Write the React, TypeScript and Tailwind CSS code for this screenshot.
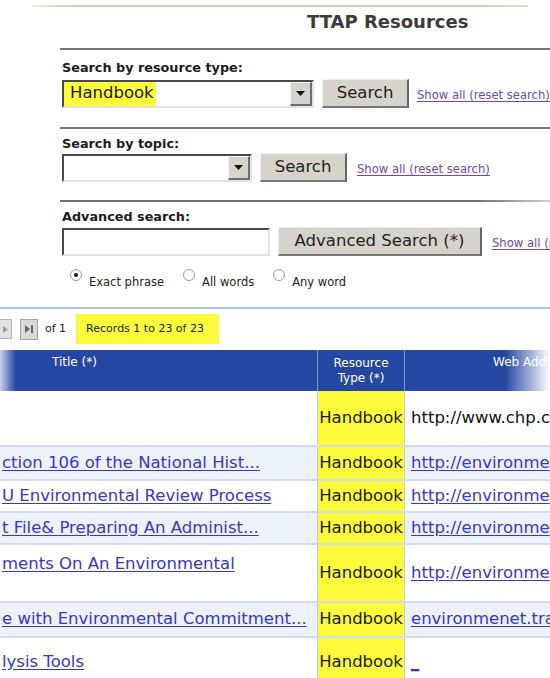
import React from 'react';

type Row = {
  title: string;
  web: string;
  webLink: boolean;
  h: string;
  alt: boolean;
  titleTop?: boolean;
};

const rows: Row[] = [
  { title: '', web: 'http://www.chp.c', webLink: false, h: 'h-[56px]', alt: false },
  { title: 'ction 106 of the National Hist...', web: 'http://environme', webLink: true, h: 'h-[34px]', alt: true },
  { title: 'U Environmental Review Process', web: 'http://environme', webLink: true, h: 'h-[32px]', alt: false },
  { title: 't File& Preparing An Administ...', web: 'http://environme', webLink: true, h: 'h-[32px]', alt: true },
  { title: 'ments On An Environmental', web: 'http://environme', webLink: true, h: 'h-[58px]', alt: false, titleTop: true },
  { title: 'e with Environmental Commitment...', web: 'environmenet.tra', webLink: true, h: 'h-[35px]', alt: true },
  { title: 'lysis Tools', web: '_', webLink: true, h: 'h-[50px]', alt: false },
];

function DropArrow() {
  return (
    <div className="w-[22px] shrink-0 self-stretch flex items-center justify-center bg-[#d6d3cc] border-t border-l border-t-[#f4f4f4] border-l-[#f4f4f4] border-b-2 border-r-2 border-b-[#6d6d6d] border-r-[#6d6d6d]">
      <svg width="9" height="5" viewBox="0 0 9 5">
        <path d="M0 0h9L4.5 5z" fill="#111" />
      </svg>
    </div>
  );
}

function SelectBox({ width, value }: { width: string; value?: string }) {
  return (
    <div className={`${width} shrink-0 h-[28px] flex bg-white border-2 border-t-[#4a4a4a] border-l-[#4a4a4a] border-b-[#e2e2e2] border-r-[#e2e2e2]`}>
      <div className="flex-1 flex items-center">
        {value && (
          <span className="h-full flex items-center bg-[#fbfb3c] pl-[6px] pr-[2px] text-[16.5px] text-[#1a1a1a]">{value}</span>
        )}
      </div>
      <DropArrow />
    </div>
  );
}

function Button({ label, width }: { label: string; width: string }) {
  return (
    <button className={`${width} shrink-0 h-[29px] bg-[#d6d3cc] text-[16.5px] text-[#222] border-t border-l border-t-[#f2f2f2] border-l-[#f2f2f2] border-b-2 border-r-2 border-b-[#777] border-r-[#666] leading-none whitespace-nowrap`}>
      {label}
    </button>
  );
}

function ResetLink({ text }: { text: string }) {
  return (
    <a className="shrink-0 text-[11.6px] text-[#7048b0] underline underline-offset-2 whitespace-nowrap">{text}</a>
  );
}

function Radio({ checked, label }: { checked?: boolean; label: string }) {
  return (
    <div className="flex items-start gap-[7px]">
      <span className="mt-[-3px] w-[12px] h-[12px] rounded-full border border-[#9a9a9a] bg-white flex items-center justify-center">
        {checked && <span className="w-[4px] h-[4px] rounded-full bg-[#111]" />}
      </span>
      <span className="text-[11.5px] leading-[16px] text-[#222] mt-[2px]">{label}</span>
    </div>
  );
}

function Divider({ className }: { className: string }) {
  return <div className={`h-[2px] ${className}`} />;
}

export default function App() {
  return (
    <div className="w-[550px] h-[678px] overflow-hidden bg-white font-['DejaVu_Sans',sans-serif] text-[#222]">
      {/* paper edge */}
      <div className="pt-[5px] pl-[32px] pr-[22px]">
        <div className="h-[2px] bg-[linear-gradient(90deg,#ece7d8,#d8cfb4_8%,#d8cfb4_92%,#e4ddca)]" />
      </div>

      <h1 className="mt-[4px] pl-[307px] text-[18px] font-bold leading-[22px] text-[#3b3b3b] whitespace-nowrap">TTAP Resources</h1>

      <div className="pl-[60px]">
        <Divider className="mt-[15px] bg-[#747474]" />

        <div className="pl-[2px]">
          <div className="mt-[10px] text-[12.8px] font-bold leading-[16px] text-[#1c1c1c]">Search by resource type:</div>
          <div className="mt-[3px] flex items-center">
            <SelectBox width="w-[252px]" value="Handbook" />
            <div className="ml-[8px] shrink-0"><Button label="Search" width="w-[87px]" /></div>
            <div className="ml-[8px] shrink-0"><ResetLink text="Show all (reset search)" /></div>
          </div>
        </div>

        <Divider className="mt-[19px] bg-[#777]" />

        <div className="pl-[2px]">
          <div className="mt-[7px] text-[12.8px] font-bold leading-[16px] text-[#1c1c1c]">Search by topic:</div>
          <div className="mt-[1px] flex items-center">
            <SelectBox width="w-[190px]" />
            <div className="ml-[8px] shrink-0"><Button label="Search" width="w-[87px]" /></div>
            <div className="ml-[10px] shrink-0"><ResetLink text="Show all (reset search)" /></div>
          </div>
        </div>

        <Divider className="mt-[18px] bg-[linear-gradient(90deg,#6f6f6f,#6f6f6f_85%,#d0d0d0)]" />

        <div className="pl-[2px]">
          <div className="mt-[7px] text-[12.8px] font-bold leading-[16px] text-[#1c1c1c]">Advanced search:</div>
          <div className="mt-[2px] flex items-center">
            <div className="w-[208px] shrink-0 h-[28px] bg-white border-2 border-t-[#4a4a4a] border-l-[#4a4a4a] border-b-[#e2e2e2] border-r-[#e2e2e2]" />
            <div className="ml-[8px] shrink-0"><Button label="Advanced Search (*)" width="w-[204px]" /></div>
            <div className="ml-[10px] shrink-0"><ResetLink text="Show all (reset search)" /></div>
          </div>

          <div className="mt-[16px] pl-[8px] flex gap-[19px]">
            <Radio checked label="Exact phrase" />
            <Radio label="All words" />
            <Radio label="Any word" />
          </div>
        </div>
      </div>

      <div className="mt-[17px] h-[2px] bg-[#a9c3e6]" />

      {/* pager */}
      <div className="mt-[5px] h-[30px] flex items-center whitespace-nowrap">
        <div className="w-[12px] h-[20px] bg-[#e2e2e2] border border-l-0 border-[#b4b4b4] flex items-center justify-center">
          <svg width="5" height="7" viewBox="0 0 5 7"><path d="M0 0l5 3.5L0 7z" fill="#9a9a9a" /></svg>
        </div>
        <div className="ml-[8px] w-[18px] h-[21px] bg-[#d9d9d9] border border-[#a6a6a6] flex items-center justify-center">
          <svg width="10" height="10" viewBox="0 0 10 10">
            <path d="M1 1l5 4-5 4z" fill="#666" />
            <rect x="7" y="1" width="2" height="8" fill="#666" />
          </svg>
        </div>
        <span className="ml-[7px] text-[11px] text-[#222]">of 1</span>
        <div className="ml-[10px] h-[30px] w-[143px] bg-[#fbfb3c] flex items-center pl-[10px] text-[11px] text-[#1c1c1c]">
          Records 1 to 23 of 23
        </div>
      </div>

      {/* results grid */}
      <div className="mt-[6px] h-[41px] grid grid-cols-[317px_88px_1fr] bg-[linear-gradient(90deg,#c9d1e8_0px,#2546a1_16px,#2546a1_505px,#ffffff_550px)] text-white text-[12px] leading-[15px] whitespace-nowrap">
        <div className="pl-[52px] pt-[5px]">Title (*)</div>
        <div className="border-x border-[#809cd6] text-center pt-[6px]">Resource<br />Type (*)</div>
        <div className="pl-[88px] pt-[5px] overflow-hidden">Web Address</div>
      </div>

      {rows.map((r, i) => (
        <div
          key={i}
          className={`${r.h} grid grid-cols-[317px_88px_1fr] border-b-2 border-[#d2ddef] text-[16.5px] whitespace-nowrap ${r.alt ? 'bg-[#edf2fa]' : 'bg-white'}`}
        >
          <div className={`flex ${r.titleTop ? 'items-start pt-[7px]' : 'items-center'} overflow-hidden`}>
            {r.title && <a className="pl-[2px] text-[#3636d0] underline underline-offset-2">{r.title}</a>}
          </div>
          <div className="bg-[#fbfb3c] border-x border-[#b9cce9] flex items-center justify-center text-[#1a1a1a]">Handbook</div>
          <div className="flex items-center pl-[6px] overflow-hidden">
            {r.webLink ? (
              <a className="text-[#3636d0] underline underline-offset-2">{r.web}</a>
            ) : (
              <span className="text-[#111]">{r.web}</span>
            )}
          </div>
        </div>
      ))}
    </div>
  );
}
